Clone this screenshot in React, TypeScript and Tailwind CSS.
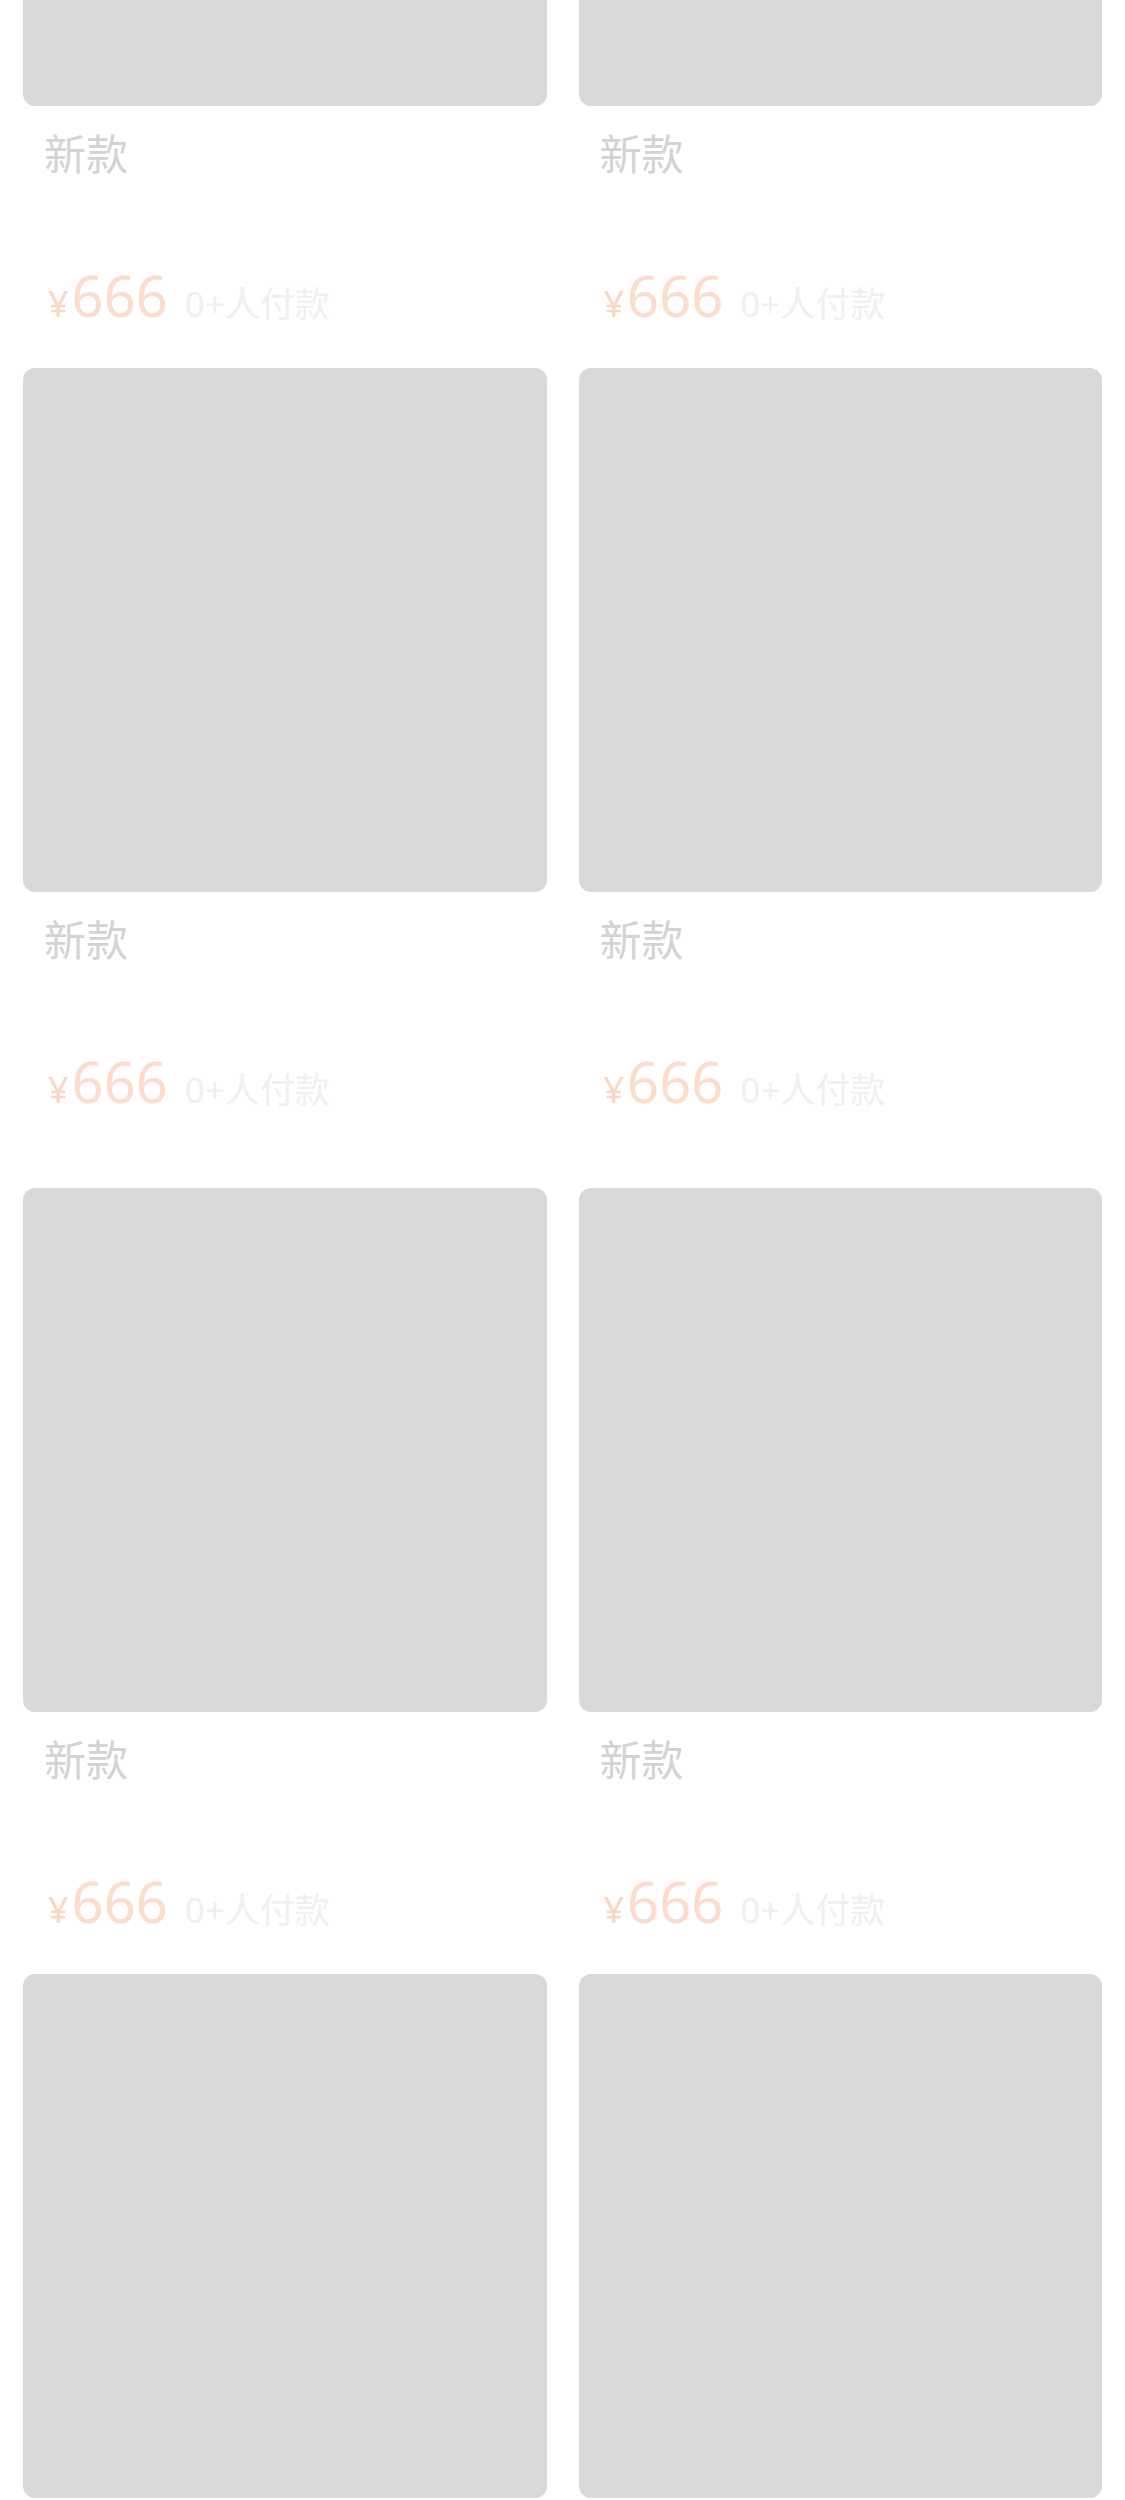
import React from 'react';

// one placeholder product card in the waterfall list
interface Product {
  id: number;
  title: string;
  price: string;
  sold: string;
  tall?: boolean;
}

const products: Product[] = Array.from({ length: 8 }, (_, i) => ({
  id: i,
  title: '新款',
  price: '666',
  sold: '0+人付款',
  // the second row leaves a little more room below the price
  tall: i === 2 || i === 3,
}));

const ProductCard: React.FC<{ item: Product }> = ({ item }) => {
  return (
    <div className={`bg-white px-[8px] pt-[8px] ${item.tall ? 'pb-[71px]' : 'pb-[37px]'}`}>
      <div className="h-[524px] rounded-[12px] bg-[#d9d9d9]"></div>
      <div className="mt-[24px] pl-[21px] text-[42px] leading-[48px] text-[#d3d3d3]">
        {item.title}
      </div>
      <div className="mt-[89px] pl-[25px] flex items-baseline leading-none">
        <span className="text-[36px] text-[#fcd6c2]">¥</span>
        <span className="ml-[3px] text-[56px] text-[#fddccc]">{item.price}</span>
        <span className="ml-[17px] text-[35px] text-[#f0f0f0]">{item.sold}</span>
      </div>
    </div>
  );
};

const App: React.FC = () => {
  return (
    <div
      lang="zh-CN"
      className="h-[2500px] w-full overflow-hidden bg-white"
      style={{ fontFamily: '"Noto Sans", "Noto Sans CJK SC", sans-serif' }}
    >
      {/* list is scrolled: first row sits partly above the viewport */}
      <div className="-mt-[426px] px-[15px] grid grid-cols-2 gap-x-[16px]">
        {products.map((item) => (
          <ProductCard key={item.id} item={item} />
        ))}
      </div>
    </div>
  );
};

export default App;
